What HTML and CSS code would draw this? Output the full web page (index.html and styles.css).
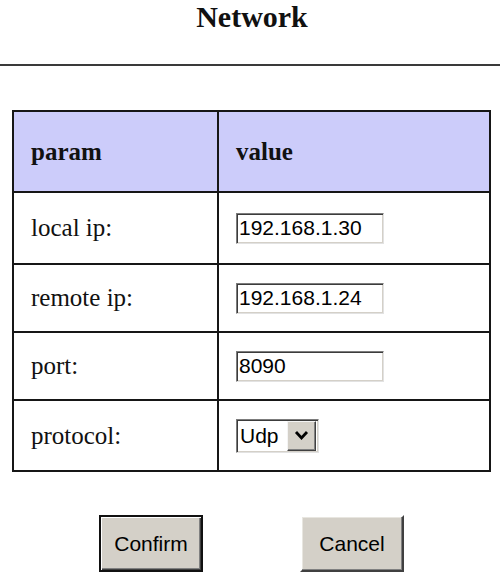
FILE: index.html
```html
<!DOCTYPE html>
<html>
<head>
<meta charset="utf-8">
<title>Network</title>
<link rel="stylesheet" href="styles.css">
</head>
<body>
<h1 class="title">Network</h1>
<hr class="rule">
<form class="netform">
  <table class="params">
    <tr class="head">
      <th class="col-param">param</th>
      <th class="col-value">value</th>
    </tr>
    <tr class="row r1">
      <td>local ip:</td>
      <td><input class="field" type="text" value="192.168.1.30"></td>
    </tr>
    <tr class="row r2">
      <td>remote ip:</td>
      <td><input class="field" type="text" value="192.168.1.24"></td>
    </tr>
    <tr class="row r3">
      <td>port:</td>
      <td><input class="field" type="text" value="8090"></td>
    </tr>
    <tr class="row r4">
      <td>protocol:</td>
      <td>
        <span class="select">
          <span class="select-text">Udp</span>
          <span class="select-btn">
            <svg width="17" height="13" viewBox="0 0 17 13"><path d="M3 3 L8.5 9 L14 3" fill="none" stroke="#000" stroke-width="2.8"/></svg>
          </span>
        </span>
      </td>
    </tr>
  </table>
  <div class="actions">
    <button type="button" class="btn btn-default">Confirm</button>
    <button type="button" class="btn">Cancel</button>
  </div>
</form>
</body>
</html>
```
FILE: styles.css
```css
html, body {
  margin: 0;
  padding: 0;
  background: #fff;
}
body {
  width: 500px;
  font-family: "Liberation Serif", "Times New Roman", serif;
  color: #111;
}
.title {
  margin: 0;
  font-size: 30px;
  line-height: 33px;
  font-weight: bold;
  text-align: center;
  padding-left: 4px;
}
.rule {
  margin: 31px 0 0 0;
  border: 0;
  border-top: 2px solid #3a3a3a;
  height: 0;
}
.netform {
  margin: 0;
}
.params {
  border-collapse: collapse;
  width: 479px;
  margin: 44px 0 0 12px;
  font-size: 25px;
}
.params th,
.params td {
  border: 2px solid #161616;
  padding: 0 0 0 17px;
  text-align: left;
  vertical-align: middle;
}
.params th {
  background: #ccccfa;
  font-weight: bold;
}
.col-param {
  width: 186px;
}
.head { height: 81px; }
.r1 { height: 72px; }
.r2 { height: 68px; }
.r3 { height: 68px; }
.r4 { height: 71px; }
.field {
  box-sizing: border-box;
  width: 148px;
  height: 31px;
  margin: 0;
  padding: 0 0 0 2px;
  font-family: "Liberation Sans", Arial, sans-serif;
  font-size: 21px;
  color: #000;
  background: #fff;
  border: 1px solid;
  border-color: #7c7c7c #e2e2e2 #e2e2e2 #7c7c7c;
  box-shadow: inset 1px 1px 0 #3c3c3c, inset -1px -1px 0 #d4d0c8;
  outline: none;
  vertical-align: middle;
}
.select {
  box-sizing: border-box;
  display: inline-flex;
  align-items: center;
  width: 83px;
  height: 34px;
  padding: 2px;
  border: 1px solid;
  border-color: #7c7c7c #e2e2e2 #e2e2e2 #7c7c7c;
  box-shadow: inset 1px 1px 0 #3c3c3c, inset -1px -1px 0 #d4d0c8;
  background: #fff;
  font-family: "Liberation Sans", Arial, sans-serif;
  font-size: 21px;
  color: #000;
  vertical-align: middle;
}
.select-text {
  flex: 1;
  padding-left: 1px;
}
.select-btn {
  box-sizing: border-box;
  display: flex;
  align-items: center;
  justify-content: center;
  width: 29px;
  height: 30px;
  background: #d4d0c8;
  border: 1px solid;
  border-color: #f4f4f4 #404040 #404040 #f4f4f4;
  box-shadow: inset -1px -1px 0 #808080;
}
.actions {
  display: flex;
  justify-content: center;
  gap: 97px;
  margin: 43px 0 0 0;
  padding-left: 3px;
}
.btn {
  box-sizing: border-box;
  width: 104px;
  height: 57px;
  margin: 0;
  padding: 0;
  font-family: "Liberation Sans", Arial, sans-serif;
  font-size: 21px;
  color: #000;
  background: #d4d0c8;
  border: 2px solid;
  border-color: #ffffff #404040 #404040 #ffffff;
  box-shadow: inset -1px -1px 0 #808080, inset 1px 1px 0 #e8e6e0;
}
.btn-default {
  border: 2px solid #111;
  box-shadow: inset 1px 1px 0 #fff, inset -1px -1px 0 #404040, inset -2px -2px 0 #808080;
}
```
